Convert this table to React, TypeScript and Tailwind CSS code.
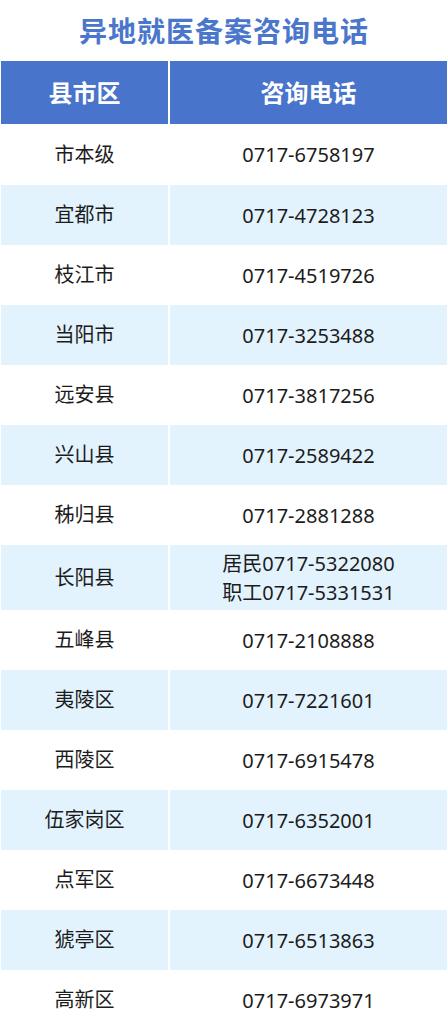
const rows: { area: string; phones: string[] }[] = [
  { area: '市本级', phones: ['0717-6758197'] },
  { area: '宜都市', phones: ['0717-4728123'] },
  { area: '枝江市', phones: ['0717-4519726'] },
  { area: '当阳市', phones: ['0717-3253488'] },
  { area: '远安县', phones: ['0717-3817256'] },
  { area: '兴山县', phones: ['0717-2589422'] },
  { area: '秭归县', phones: ['0717-2881288'] },
  { area: '长阳县', phones: ['居民0717-5322080', '职工0717-5331531'] },
  { area: '五峰县', phones: ['0717-2108888'] },
  { area: '夷陵区', phones: ['0717-7221601'] },
  { area: '西陵区', phones: ['0717-6915478'] },
  { area: '伍家岗区', phones: ['0717-6352001'] },
  { area: '点军区', phones: ['0717-6673448'] },
  { area: '猇亭区', phones: ['0717-6513863'] },
  { area: '高新区', phones: ['0717-6973971'] },
];

export default function App() {
  return (
    <div className="w-[448px] min-h-[1032px] bg-white font-['Noto_Sans','Noto_Sans_CJK_SC',sans-serif]">
      {/* Title */}
      <h1 className="h-[61px] flex items-center justify-center text-[28px] font-bold tracking-[1px] text-[#4a76cb]">
        异地就医备案咨询电话
      </h1>

      <div className="mx-[1px]">
        {/* Header */}
        <div className="grid grid-cols-[167px_1fr] gap-x-[2px] h-[63px]">
          <div className="bg-[#4874cb] flex items-center justify-center text-white text-[24px] font-bold">县市区</div>
          <div className="bg-[#4874cb] flex items-center justify-center text-white text-[24px] font-bold">咨询电话</div>
        </div>

        {/* Rows */}
        {rows.map((row, i) => {
          const bg = i % 2 === 1 ? 'bg-[#e2f3fd]' : 'bg-white';
          const tall = row.phones.length > 1;
          const h = tall ? 'h-[65px]' : i === 0 ? 'h-[61px]' : 'h-[60px]';
          return (
            <div key={row.area} className={`grid grid-cols-[167px_1fr] gap-x-[2px] ${h}`}>
              <div className={`${bg} flex items-center justify-center text-[20px] text-[#1c1c1c]`}>
                {row.area}
              </div>
              <div className={`${bg} flex flex-col items-center justify-center text-[20px] leading-[29px] text-[#1c1c1c]`}>
                {row.phones.map((p) => (
                  <span key={p}>{p}</span>
                ))}
              </div>
            </div>
          );
        })}
      </div>
    </div>
  );
}
